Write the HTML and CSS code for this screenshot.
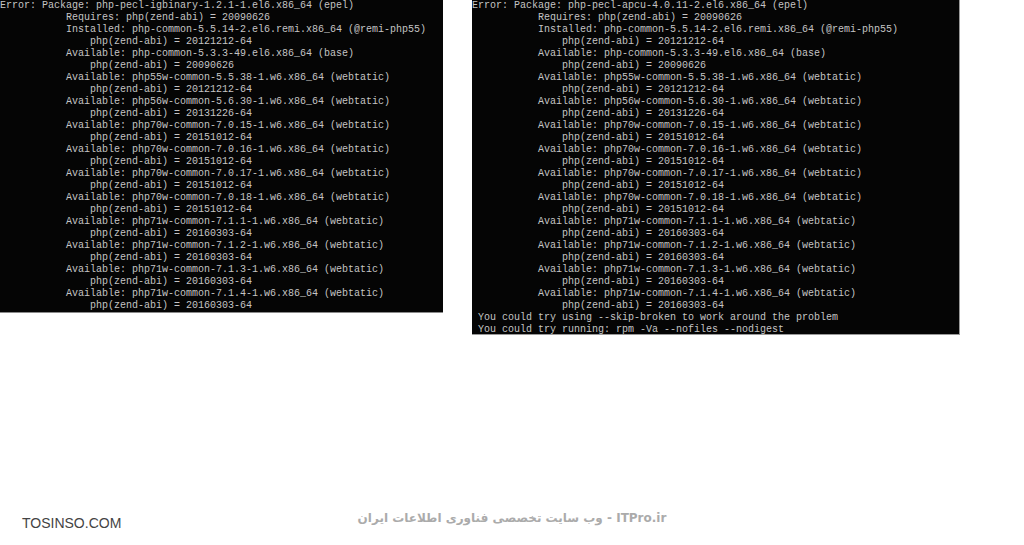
FILE: index.html
```html
<!DOCTYPE html>
<html lang="en">
<head>
    <meta charset="UTF-8">
    <meta name="viewport" content="width=device-width, initial-scale=1.0">
    <title>yum error</title>
    <link rel="stylesheet" href="styles.css">
</head>
<body>
    <div class="shots">
        <pre class="term term-left">Error: Package: php-pecl-igbinary-1.2.1-1.el6.x86_64 (epel)
           Requires: php(zend-abi) = 20090626
           Installed: php-common-5.5.14-2.el6.remi.x86_64 (@remi-php55)
               php(zend-abi) = 20121212-64
           Available: php-common-5.3.3-49.el6.x86_64 (base)
               php(zend-abi) = 20090626
           Available: php55w-common-5.5.38-1.w6.x86_64 (webtatic)
               php(zend-abi) = 20121212-64
           Available: php56w-common-5.6.30-1.w6.x86_64 (webtatic)
               php(zend-abi) = 20131226-64
           Available: php70w-common-7.0.15-1.w6.x86_64 (webtatic)
               php(zend-abi) = 20151012-64
           Available: php70w-common-7.0.16-1.w6.x86_64 (webtatic)
               php(zend-abi) = 20151012-64
           Available: php70w-common-7.0.17-1.w6.x86_64 (webtatic)
               php(zend-abi) = 20151012-64
           Available: php70w-common-7.0.18-1.w6.x86_64 (webtatic)
               php(zend-abi) = 20151012-64
           Available: php71w-common-7.1.1-1.w6.x86_64 (webtatic)
               php(zend-abi) = 20160303-64
           Available: php71w-common-7.1.2-1.w6.x86_64 (webtatic)
               php(zend-abi) = 20160303-64
           Available: php71w-common-7.1.3-1.w6.x86_64 (webtatic)
               php(zend-abi) = 20160303-64
           Available: php71w-common-7.1.4-1.w6.x86_64 (webtatic)
               php(zend-abi) = 20160303-64</pre>
        <pre class="term term-right">Error: Package: php-pecl-apcu-4.0.11-2.el6.x86_64 (epel)
           Requires: php(zend-abi) = 20090626
           Installed: php-common-5.5.14-2.el6.remi.x86_64 (@remi-php55)
               php(zend-abi) = 20121212-64
           Available: php-common-5.3.3-49.el6.x86_64 (base)
               php(zend-abi) = 20090626
           Available: php55w-common-5.5.38-1.w6.x86_64 (webtatic)
               php(zend-abi) = 20121212-64
           Available: php56w-common-5.6.30-1.w6.x86_64 (webtatic)
               php(zend-abi) = 20131226-64
           Available: php70w-common-7.0.15-1.w6.x86_64 (webtatic)
               php(zend-abi) = 20151012-64
           Available: php70w-common-7.0.16-1.w6.x86_64 (webtatic)
               php(zend-abi) = 20151012-64
           Available: php70w-common-7.0.17-1.w6.x86_64 (webtatic)
               php(zend-abi) = 20151012-64
           Available: php70w-common-7.0.18-1.w6.x86_64 (webtatic)
               php(zend-abi) = 20151012-64
           Available: php71w-common-7.1.1-1.w6.x86_64 (webtatic)
               php(zend-abi) = 20160303-64
           Available: php71w-common-7.1.2-1.w6.x86_64 (webtatic)
               php(zend-abi) = 20160303-64
           Available: php71w-common-7.1.3-1.w6.x86_64 (webtatic)
               php(zend-abi) = 20160303-64
           Available: php71w-common-7.1.4-1.w6.x86_64 (webtatic)
               php(zend-abi) = 20160303-64
 You could try using --skip-broken to work around the problem
 You could try running: rpm -Va --nofiles --nodigest</pre>
    </div>

    <div class="footer">
        <div class="brand">TOSINSO.COM</div>
        <div class="site" dir="rtl">ITPro.ir - وب سایت تخصصی فناوری اطلاعات ایران</div>
        <div></div>
    </div>
</body>
</html>
```

FILE: styles.css
```css
* {
    margin: 0;
    padding: 0;
    box-sizing: border-box;
}
body {
    background: #ffffff;
    width: 1024px;
    height: 545px;
    overflow: hidden;
}
.shots {
    display: flex;
    align-items: flex-start;
    gap: 29px;
}
.term {
    background: #050505;
    color: #c4c4c4;
    font-family: "Liberation Mono", "Courier New", monospace;
    font-size: 10px;
    line-height: 12px;
    white-space: pre;
    overflow: hidden;
}
.term-left {
    width: 443px;
    height: 313px;
    border-bottom: 1px solid #8a8a8a;
}
.term-right {
    width: 488px;
    height: 335px;
    border-right: 1px solid #9a9a9a;
    border-bottom: 1px solid #9a9a9a;
}
.footer {
    display: grid;
    grid-template-columns: 1fr auto 1fr;
    align-items: center;
    margin-top: 170px;
    height: 26px;
}
.brand {
    padding-left: 22px;
    padding-top: 10px;
    font-family: "Liberation Sans", Arial, sans-serif;
    font-size: 14px;
    color: #444444;
}
.site {
    font-family: "DejaVu Sans", "Liberation Sans", sans-serif;
    font-size: 12px;
    font-weight: bold;
    color: #ababab;
}
```
